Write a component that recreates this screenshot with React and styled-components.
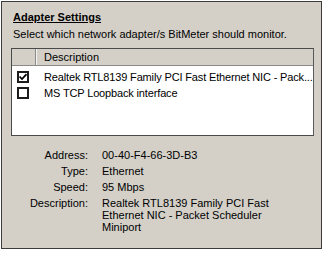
import React from "react";
import styled, { createGlobalStyle } from "styled-components";

const GlobalStyle = createGlobalStyle`
  body {
    margin: 0;
    background: #ffffff;
    font-family: "Liberation Sans", Arial, sans-serif;
    font-size: 11px;
    color: #000000;
  }
`;

const Frame = styled.div`
  box-sizing: border-box;
  margin: 1px;
  width: 321px;
  height: 248px;
  border: 1px solid #3c3c3c;
  background: #d4d0c8;
  padding: 8px 7px 0 9px;
  display: flex;
  flex-direction: column;
`;

const Title = styled.div`
  margin-left: 2px;
  font-weight: bold;
  text-decoration: underline;
  line-height: 14px;
`;

const Subtitle = styled.div`
  margin: 3px 0 0 2px;
  line-height: 14px;
  white-space: nowrap;
`;

const ListBox = styled.div`
  box-sizing: border-box;
  margin-top: 7px;
  height: 88px;
  background: #ffffff;
  border: 1px solid #4a4a4a;
  border-right-color: #5a5a5a;
  overflow: hidden;
`;

const Header = styled.div`
  display: flex;
  height: 16px;
  background: #d4d0c8;
  border-bottom: 1px solid #8a8a8a;
  line-height: 16px;
`;

const HeaderCell = styled.div`
  box-sizing: border-box;
  width: ${(props) => (props.narrow ? "24px" : "auto")};
  flex: ${(props) => (props.narrow ? "none" : "1")};
  padding-left: ${(props) => (props.narrow ? "0" : "7px")};
  border-right: ${(props) => (props.narrow ? "1px solid #8a8a8a" : "none")};
  border-left: ${(props) => (props.narrow ? "none" : "1px solid #f4f4f4")};
`;

const Rows = styled.div`
  padding-top: 3px;
`;

const Row = styled.div`
  display: flex;
  align-items: center;
  height: 16px;
  padding-left: 5px;
`;

const Check = styled.span`
  box-sizing: border-box;
  flex: none;
  width: 12px;
  height: 12px;
  border: 2px solid #1c1c1c;
  background: #ffffff;
  display: flex;
  align-items: center;
  justify-content: center;
`;

const RowText = styled.span`
  margin-left: 15px;
  white-space: nowrap;
  line-height: 16px;
  letter-spacing: -0.15px;
`;

const Details = styled.div`
  margin-top: 13px;
  display: grid;
  grid-template-columns: 77px 180px;
  column-gap: 14px;
  row-gap: 4px;
  line-height: 12px;
`;

const Label = styled.div`
  text-align: right;
`;

const Value = styled.div``;

const CheckMark = () => (
  <svg width="8" height="8" viewBox="0 0 8 8">
    <path d="M0.5 3.5 L3 6 L7.5 1.2" fill="none" stroke="#000" strokeWidth="1.7" />
  </svg>
);

const adapters = [
  { name: "Realtek RTL8139 Family PCI Fast Ethernet NIC - Pack...", checked: true },
  { name: "MS TCP Loopback interface", checked: false },
];

const details = [
  ["Address:", "00-40-F4-66-3D-B3"],
  ["Type:", "Ethernet"],
  ["Speed:", "95 Mbps"],
  ["Description:", "Realtek RTL8139 Family PCI Fast Ethernet NIC - Packet Scheduler Miniport"],
];

export default function App() {
  return (
    <>
      <GlobalStyle />
      <Frame>
        <Title>Adapter Settings</Title>
        <Subtitle>Select which network adapter/s BitMeter should monitor.</Subtitle>
        <ListBox>
          <Header>
            <HeaderCell narrow />
            <HeaderCell>Description</HeaderCell>
          </Header>
          <Rows>
            {adapters.map((a) => (
              <Row key={a.name}>
                <Check>{a.checked && <CheckMark />}</Check>
                <RowText>{a.name}</RowText>
              </Row>
            ))}
          </Rows>
        </ListBox>
        <Details>
          {details.map(([label, value]) => (
            <React.Fragment key={label}>
              <Label>{label}</Label>
              <Value>{value}</Value>
            </React.Fragment>
          ))}
        </Details>
      </Frame>
    </>
  );
}
